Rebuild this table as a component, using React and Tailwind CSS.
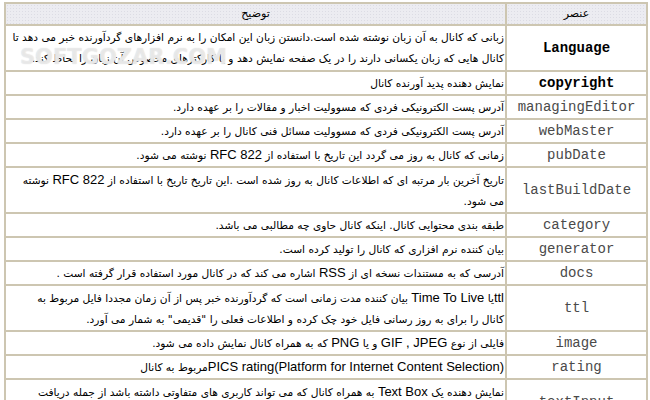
import React from 'react';

const L = ({ children }) => (
  <span className="[font-family:'Liberation_Sans',Arial,sans-serif] text-[13px]">{children}</span>
);

const rows = [
  {
    name: 'Language', bold: true, two: true,
    lines: [
      'زبانی که کانال به آن زبان نوشته شده است.دانستن زبان این امکان را به نرم افزارهای گردآورنده خبر می دهد تا',
      'کانال هایی که زبان یکسانی دارند را در یک صفحه نمایش دهد و یا کارکترهای مخصوص آن زبان را لحاظ کند.',
    ],
  },
  { name: 'copyright', bold: true, lines: ['نمایش دهنده پدید آورنده کانال'] },
  { name: 'managingEditor', lines: ['آدرس پست الکترونیکی فردی که مسوولیت اخبار و مقالات را بر عهده دارد.'] },
  { name: 'webMaster', lines: ['آدرس پست الکترونیکی فردی که مسوولیت مسائل فنی کانال  را بر عهده دارد.'] },
  {
    name: 'pubDate',
    lines: [<>زمانی که کانال به روز می گردد این تاریخ با استفاده از <L>RFC 822</L> نوشته می شود.</>],
  },
  {
    name: 'lastBuildDate', two: true,
    lines: [
      <>تاریخ آخرین بار مرتبه ای که اطلاعات کانال به روز شده است .این تاریخ تاریخ با استفاده از <L>RFC 822</L> نوشته</>,
      'می شود.',
    ],
  },
  { name: 'category', lines: ['طبقه بندی محتوایی کانال. اینکه کانال حاوی چه مطالبی می باشد.'] },
  { name: 'generator', lines: ['بیان کننده نرم افزاری که کانال را تولید کرده است.'] },
  {
    name: 'docs',
    lines: [<>آدرسی که به مستندات نسخه ای از <L>RSS</L> اشاره می کند که در کانال مورد استفاده قرار گرفته است .</>],
  },
  {
    name: 'ttl', two: true,
    lines: [
      <><L>ttl</L>یا <L>Time To Live</L> بیان کننده مدت زمانی است که گردآورنده خبر پس از آن زمان مجددا فایل مربوط به</>,
      'کانال را برای به روز رسانی فایل خود  چک کرده و اطلاعات فعلی را "قدیمی" به شمار می آورد.',
    ],
  },
  {
    name: 'image',
    lines: [<>فایلی از نوع <L>GIF , JPEG</L> و یا  <L>PNG</L>  که به همراه کانال نمایش داده می شود.</>],
  },
  {
    name: 'rating',
    lines: [<><L>PICS rating(Platform for Internet Content Selection)</L>{'\u200E'}مربوط به کانال</>],
  },
  {
    name: 'textInput', two: true,
    lines: [
      <>نمایش دهنده یک <L>Text Box</L> به همراه کانال که می تواند کاربری های متفاوتی داشته باشد از جمله دریافت</>,
      'نظرات کاربران و یا جستجو در محتوای سایت و موارد دیگر.',
    ],
  },
];

export default function App() {
  return (
    <div className="relative w-[650px] h-[400px] overflow-hidden bg-white [font-family:'DejaVu_Sans',Tahoma,sans-serif] text-black">
      <div
        dir="rtl"
        className="ml-[4px] mt-[2px] w-[644px] grid grid-cols-[139px_1fr] gap-[2px] bg-[#cdc6b1] p-[2px]"
      >
        <div className="h-[20px] flex items-center justify-center text-[11px] bg-[#ececf1] bg-[radial-gradient(#dcdce4_0.6px,transparent_0.8px)] bg-[length:3px_3px]">
          عنصر
        </div>
        <div className="h-[20px] flex items-center justify-center text-[11px] bg-[#ececf1] bg-[radial-gradient(#dcdce4_0.6px,transparent_0.8px)] bg-[length:3px_3px]">
          توضیح
        </div>
        {rows.map((r, i) => (
          <React.Fragment key={i}>
            <div
              dir="ltr"
              className={`${r.two ? 'h-[44px]' : 'h-[22px]'} bg-white flex items-center justify-center [font-family:'Liberation_Mono','Courier_New',monospace] text-[14px] ${r.bold ? 'font-bold text-black' : 'text-[#4a4a4a]'}`}
            >
              {r.name}
            </div>
            <div
              className={`${r.two ? 'h-[44px]' : 'h-[22px]'} bg-white flex flex-col justify-center pr-[1px] text-[10.65px] leading-[21px] whitespace-nowrap overflow-hidden`}
            >
              {r.lines.map((ln, j) => (
                <div key={j}>{ln}</div>
              ))}
            </div>
          </React.Fragment>
        ))}
      </div>
      <div className="absolute left-[20px] top-[42px] text-[21px] font-bold text-white/50 [text-shadow:0_0_1px_#d0d0d0] pointer-events-none [font-family:'DejaVu_Sans',sans-serif]">
        SOFTGOZAR.COM
      </div>
    </div>
  );
}
